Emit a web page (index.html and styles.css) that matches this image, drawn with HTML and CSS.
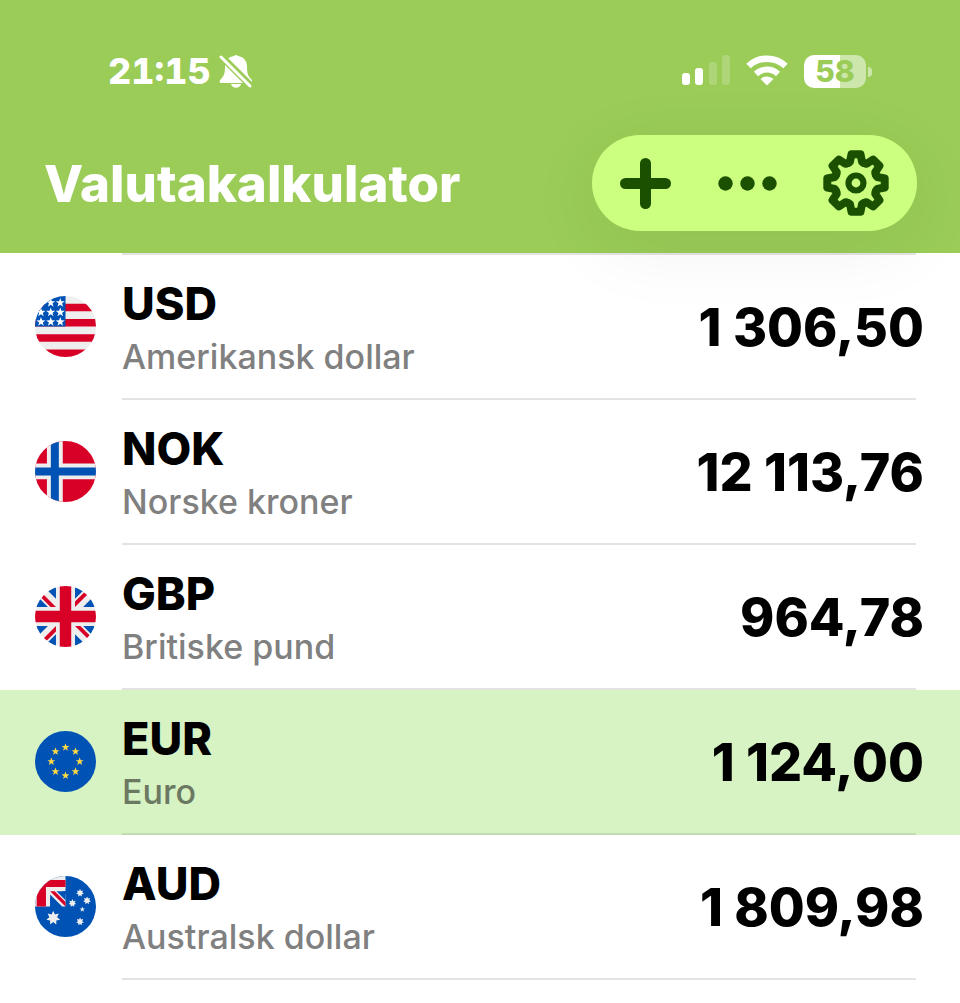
FILE: index.html
```
<!DOCTYPE html>
<html lang="no">
<head>
    <meta charset="UTF-8">
    <meta name="viewport" content="width=device-width, initial-scale=1.0">
    <title>Valutakalkulator</title>
    <link rel="stylesheet" href="styles.css">
</head>
<body>
    <svg class="symbols" aria-hidden="true">
        <symbol id="star" viewBox="-10 -10 20 20">
            <polygon points="0,-10 2.4,-3.2 9.5,-3.1 3.8,1.2 5.9,8.1 0,4 -5.9,8.1 -3.8,1.2 -9.5,-3.1 -2.4,-3.2"/>
        </symbol>
        <symbol id="star7" viewBox="-10 -10 20 20">
            <polygon points="0,-10 2.4,-5 7.8,-6.2 5.4,-1.2 9.7,2.2 4.3,3.5 4.3,9 0,5.6 -4.3,9 -4.3,3.5 -9.7,2.2 -5.4,-1.2 -7.8,-6.2 -2.4,-5"/>
        </symbol>
    </svg>

    <header class="header">
        <div class="status-bar">
            <div class="status-left">
                <span class="time">21:15</span>
                <svg class="bell" viewBox="0 0 34 36" width="34" height="36" aria-label="Lydløs">
                    <path fill="#fff" d="M15 3a3 3 0 0 1 4 0c6 1 9 5 9 11 0 6 1 9 4 12 2 2 1 4-1 4H3c-3 0-3-2-1-4 3-3 4-6 4-12C6 8 9 4 15 3z"/>
                    <path fill="#fff" d="M12 31h10c-1 5-9 5-10 0z"/>
                    <path stroke="#9acc57" stroke-width="7" d="M0 1l34 34"/>
                    <path stroke="#fff" stroke-width="3" stroke-linecap="round" d="M2 4l29 29"/>
                </svg>
            </div>
            <div class="status-right">
                <svg viewBox="0 0 48 32" width="48" height="32" fill="#fff" aria-label="Mobildekning">
                    <rect x="0" y="18" width="8" height="12" rx="3"/>
                    <rect x="13" y="13" width="8" height="17" rx="3"/>
                    <rect x="27" y="7" width="8" height="23" rx="3" opacity=".2"/>
                    <rect x="40" y="0" width="8" height="30" rx="3" opacity=".2"/>
                </svg>
                <svg viewBox="0 0 42 32" width="42" height="32" fill="none" stroke="#fff" aria-label="Wi-Fi">
                    <path stroke-width="6.500" d="M2.500 11a27 27 0 0 1 37 0"/>
                    <path stroke-width="6" d="M10 19a16 16 0 0 1 22 0"/>
                    <path fill="#fff" stroke="none" d="M21 30.500l-6.500-6.500a9.500 9.500 0 0 1 13 0z"/>
                </svg>
                <div class="battery"><span>58</span></div>
            </div>
        </div>
        <div class="toolbar">
            <h1>Valutakalkulator</h1>
            <div class="actions">
                <button type="button" aria-label="Legg til">
                    <svg viewBox="0 0 51 51" width="51" height="51" stroke="#1a5000" stroke-width="11" stroke-linecap="round">
                        <path d="M25.500 5.500v40M5.500 25.500h40"/>
                    </svg>
                </button>
                <button type="button" aria-label="Mer">
                    <svg viewBox="0 0 59 15" width="59" height="15" fill="#1a5000">
                        <circle cx="7.500" cy="7.500" r="7.200"/>
                        <circle cx="29.500" cy="7.500" r="7.200"/>
                        <circle cx="51.500" cy="7.500" r="7.200"/>
                    </svg>
                </button>
                <button type="button" aria-label="Innstillinger">
                    <svg viewBox="-33 -33 66 66" width="66" height="66" fill="none" stroke="#1a5000" stroke-width="8" stroke-linejoin="round" stroke-linecap="round">
                        <path id="tooth" d="M-8.200-19.900L-6-21.200L-4.500-28.700H4.500L6-21.200L8.200-19.900"/>
                        <use href="#tooth" transform="rotate(45)"/>
                        <use href="#tooth" transform="rotate(90)"/>
                        <use href="#tooth" transform="rotate(135)"/>
                        <use href="#tooth" transform="rotate(180)"/>
                        <use href="#tooth" transform="rotate(225)"/>
                        <use href="#tooth" transform="rotate(270)"/>
                        <use href="#tooth" transform="rotate(315)"/>
                        <circle r="7.500" stroke-width="6.200"/>
                    </svg>
                </button>
            </div>
        </div>
    </header>

    <ul class="currencies">
        <li class="currency">
            <svg class="flag" viewBox="0 0 512 512">
                <path fill="#eee" d="M0 0h512v512H0z"/>
                <path fill="#d80027" d="M0 64h512v64H0zM0 192h512v64H0zM0 320h512v64H0zM0 448h512v64H0z"/>
                <path fill="#0052b4" d="M0 0h256v256H0z"/>
                <g fill="#fff">
                    <use href="#star" x="92" y="17" width="80" height="80"/>
                    <use href="#star" x="172" y="17" width="80" height="80"/>
                    <use href="#star" x="10" y="97" width="80" height="80"/>
                    <use href="#star" x="92" y="97" width="80" height="80"/>
                    <use href="#star" x="172" y="97" width="80" height="80"/>
                    <use href="#star" x="10" y="177" width="80" height="80"/>
                    <use href="#star" x="92" y="177" width="80" height="80"/>
                    <use href="#star" x="172" y="177" width="80" height="80"/>
                </g>
            </svg>
            <div class="details">
                <div class="name">
                    <h2>USD</h2>
                    <p>Amerikansk dollar</p>
                </div>
                <span class="amount">1 306,50</span>
            </div>
        </li>
        <li class="currency">
            <svg class="flag" viewBox="0 0 512 512">
                <path fill="#d80027" d="M0 0h512v512H0z"/>
                <path fill="#eee" d="M100 0h133v189h279v133H233v190H100V322H0V189h100z"/>
                <path fill="#0052b4" d="M133 0h67v223h312v66H200v223h-67V289H0v-66h133z"/>
            </svg>
            <div class="details">
                <div class="name">
                    <h2>NOK</h2>
                    <p>Norske kroner</p>
                </div>
                <span class="amount">12 113,76</span>
            </div>
        </li>
        <li class="currency">
            <svg class="flag" viewBox="0 0 512 512">
                <path fill="#eee" d="M0 0h512v512H0z"/>
                <path fill="#0052b4" d="M336 0v108L444 0zM512 68L404 176h108zM0 176h108L0 68zM68 0l108 108V0zM176 512V404L68 512zM0 444l108-108H0zM512 336H404l108 108zM444 512L336 404v108z"/>
                <path fill="#d80027" d="M0 0v45l131 131h45zM208 0v208H0v96h208v208h96V304h208v-96H304V0zM467 0L336 131v45L512 0zM176 336L0 512h45l131-131zM336 336l176 176v-45L381 336z"/>
            </svg>
            <div class="details">
                <div class="name">
                    <h2>GBP</h2>
                    <p>Britiske pund</p>
                </div>
                <span class="amount">964,78</span>
            </div>
        </li>
        <li class="currency selected">
            <svg class="flag" viewBox="0 0 512 512">
                <path fill="#0052b4" d="M0 0h512v512H0z"/>
                <g fill="#ffda44">
                    <use href="#star" x="221" y="102" width="70" height="70"/>
                    <use href="#star" x="305" y="137" width="70" height="70"/>
                    <use href="#star" x="340" y="221" width="70" height="70"/>
                    <use href="#star" x="305" y="305" width="70" height="70"/>
                    <use href="#star" x="221" y="340" width="70" height="70"/>
                    <use href="#star" x="137" y="305" width="70" height="70"/>
                    <use href="#star" x="102" y="221" width="70" height="70"/>
                    <use href="#star" x="137" y="137" width="70" height="70"/>
                </g>
            </svg>
            <div class="details">
                <div class="name">
                    <h2>EUR</h2>
                    <p>Euro</p>
                </div>
                <span class="amount">1 124,00</span>
            </div>
        </li>
        <li class="currency">
            <svg class="flag" viewBox="0 0 512 512">
                <path fill="#0052b4" d="M0 0h512v512H0z"/>
                <path fill="#eee" d="M0 0h256v127h-28l28 28v101h-28L127 155v101H0z"/>
                <path fill="#0052b4" d="M180 127h76v76zM127 180l76 76h-76z"/>
                <path fill="#d80027" d="M14 33h242v59H92v164H14zM127 127l129 129v-38L165 127z"/>
                <g fill="#eee">
                    <use href="#star7" x="93" y="293" width="120" height="120"/>
                    <use href="#star7" x="344" y="108" width="68" height="68"/>
                    <use href="#star7" x="403" y="172" width="68" height="68"/>
                    <use href="#star7" x="280" y="194" width="68" height="68"/>
                    <use href="#star" x="373" y="256" width="48" height="48"/>
                    <use href="#star7" x="344" y="349" width="68" height="68"/>
                </g>
            </svg>
            <div class="details">
                <div class="name">
                    <h2>AUD</h2>
                    <p>Australsk dollar</p>
                </div>
                <span class="amount">1 809,98</span>
            </div>
        </li>
    </ul>
</body>
</html>
```
FILE: styles.css
```
* {
    box-sizing: border-box;
}
body {
    margin: 0;
    font-family: Inter, "Liberation Sans", sans-serif;
    background-color: #fff;
    color: #000;
}
.symbols {
    display: none;
}
.header {
    position: relative;
    z-index: 1;
    background-color: #9acc57;
    color: #fff;
    padding: 50px 43px 22px 44px;
}
.status-bar {
    display: flex;
    justify-content: space-between;
    align-items: center;
    height: 42px;
    padding: 0 46px 0 64px;
}
.status-left {
    display: flex;
    align-items: center;
    gap: 8px;
}
.time {
    font-size: 36px;
    font-weight: 800;
    font-variant-numeric: tabular-nums;
}
.status-right {
    display: flex;
    align-items: center;
    gap: 16px;
}
.battery {
    position: relative;
    width: 62px;
    height: 33px;
    margin-right: 5px;
    border-radius: 10px;
    background: linear-gradient(to right, #fff 58%, #cde6ab 58%);
    color: #9acc57;
    font-size: 30px;
    font-weight: 800;
    line-height: 33px;
    text-align: center;
}
.battery::after {
    content: "";
    position: absolute;
    left: 64px;
    top: 12px;
    width: 4px;
    height: 10px;
    border-radius: 0 5px 5px 0;
    background-color: #cde6ab;
}
.toolbar {
    display: flex;
    justify-content: space-between;
    align-items: center;
    margin-top: 43px;
}
h1 {
    margin: 0;
    font-size: 51px;
    font-weight: 800;
}
.actions {
    display: flex;
    justify-content: space-between;
    align-items: center;
    width: 325px;
    height: 96px;
    padding: 0 28px;
    border-radius: 48px;
    background-color: #ccff80;
    box-shadow: 0 16px 80px rgba(0, 0, 0, 0.06);
}
.actions button {
    display: flex;
    padding: 0;
    border: none;
    background: none;
    cursor: pointer;
}
.currencies {
    list-style: none;
    margin: 0;
    padding: 0;
}
.currencies::before {
    content: "";
    display: block;
    height: 2px;
    margin: 0 44px 0 122px;
    background-color: #e3e3e3;
}
.currency {
    display: flex;
    align-items: center;
    gap: 26px;
    padding: 0 44px 0 35px;
}
.flag {
    width: 61px;
    height: 61px;
    margin-bottom: 2px;
    border-radius: 50%;
}
.details {
    flex: 1;
    display: flex;
    justify-content: space-between;
    align-items: center;
    height: 145px;
    border-bottom: 2px solid #e3e3e3;
}
.name {
    padding-top: 6px;
}
.name h2 {
    margin: 0;
    font-size: 45px;
    font-weight: 800;
    line-height: 54px;
}
.name p {
    margin: 0;
    font-size: 34px;
    font-weight: 500;
    line-height: 52px;
    color: #808080;
}
.amount {
    margin-right: -8px;
    padding-top: 2px;
    font-size: 52px;
    font-weight: 800;
}
.selected {
    background-color: #d7f2c3;
}
.selected .details {
    border-color: #c3dbb2;
}
.selected p {
    color: #6c7962;
}
```
